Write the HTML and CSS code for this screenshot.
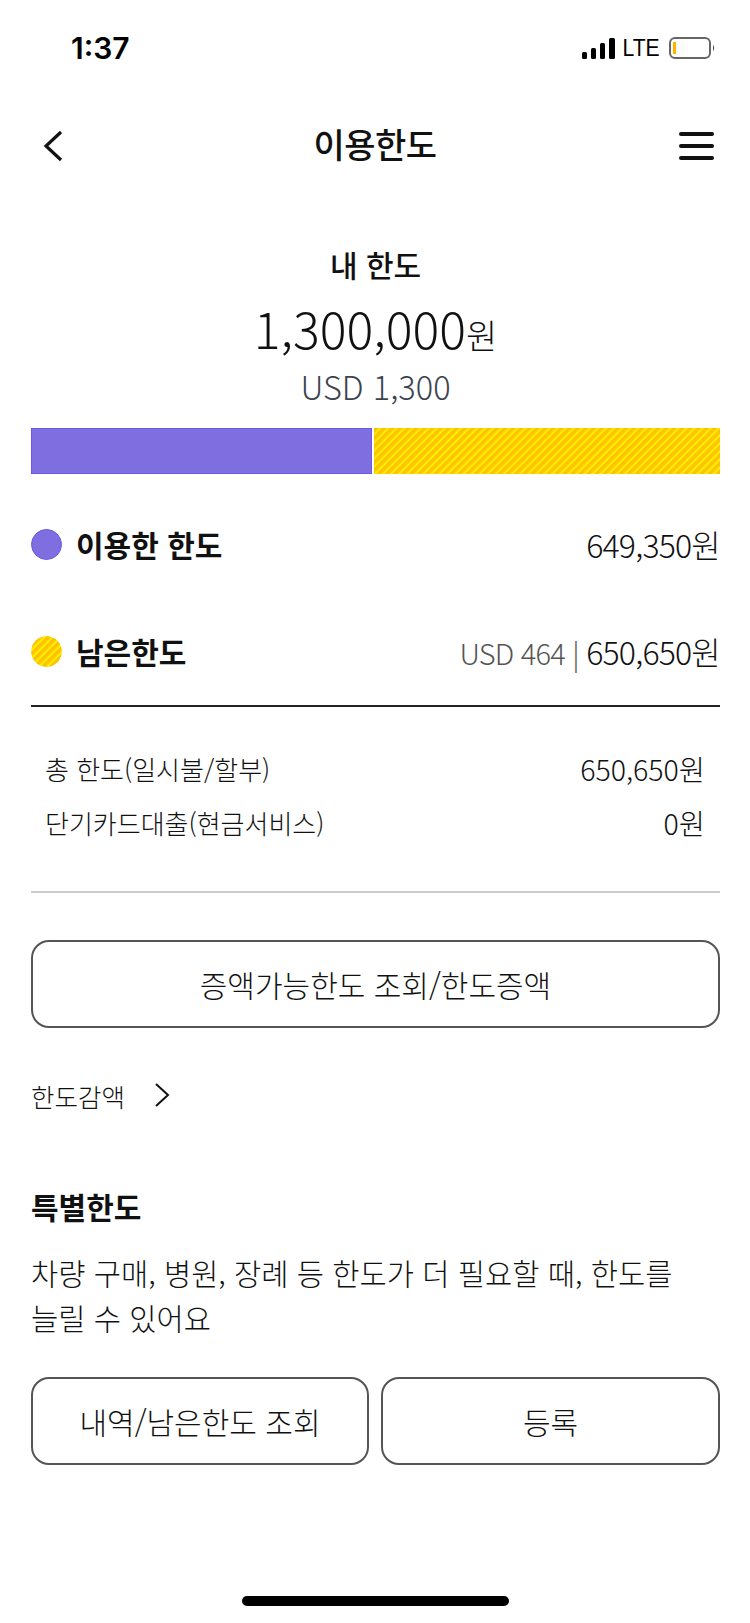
FILE: index.html
```html
<!DOCTYPE html>
<html lang="ko">
<head>
    <meta charset="UTF-8">
    <title>이용한도</title>
    <link rel="stylesheet" href="styles.css">
</head>
<body>
    <svg class="defs" width="0" height="0">
        <defs>
            <pattern id="hatch" width="5.700" height="8" patternUnits="userSpaceOnUse" patternTransform="rotate(45)">
                <rect width="5.700" height="8" fill="#ffc200"></rect>
                <rect x="3.500" width="2.200" height="8" fill="#ffee00"></rect>
            </pattern>
        </defs>
    </svg>

    <div class="status-bar">
        <span class="time">1:37</span>
        <div class="status-icons">
            <svg width="33" height="21" viewBox="0 0 33 21">
                <rect x="0" y="14" width="5" height="7" rx="1.5" fill="#000"></rect>
                <rect x="9" y="10" width="5" height="11" rx="1.5" fill="#000"></rect>
                <rect x="18" y="5" width="5" height="16" rx="1.5" fill="#000"></rect>
                <rect x="27" y="0" width="6" height="21" rx="1.5" fill="#000"></rect>
            </svg>
            <span class="lte">LTE</span>
            <svg width="46" height="22" viewBox="0 0 46 22">
                <rect x="1" y="1" width="40" height="20" rx="5" fill="none" stroke="#666" stroke-width="2"></rect>
                <rect x="4" y="5" width="3" height="12" fill="#ffb400"></rect>
                <path d="M44 8 C45.500 9 45.500 13 44 14 Z" fill="#555"></path>
            </svg>
        </div>
    </div>

    <header class="nav">
        <svg class="nav-back" width="20" height="32" viewBox="0 0 20 32">
            <path d="M18 2 L3 16 L18 30" fill="none" stroke="#111" stroke-width="3.200"></path>
        </svg>
        <h1>이용한도</h1>
        <div class="nav-menu"><span></span><span></span><span></span></div>
    </header>

    <section class="summary">
        <h2>내 한도</h2>
        <p class="total">1,300,000<small>원</small></p>
        <p class="total-usd">USD 1,300</p>
    </section>

    <div class="bar">
        <div class="bar-used"></div>
        <svg class="bar-left" width="346" height="46"><rect width="346" height="46" fill="url(#hatch)"></rect></svg>
    </div>

    <div class="legend-row first">
        <span class="dot dot-used"></span>
        <strong>이용한 한도</strong>
        <span class="amount">649,350원</span>
    </div>
    <div class="legend-row">
        <svg class="dot" width="31" height="31"><circle cx="15.500" cy="15.500" r="15.500" fill="url(#hatch)"></circle></svg>
        <strong>남은한도</strong>
        <span class="amount"><em>USD 464 | </em>650,650원</span>
    </div>

    <div class="detail">
        <div class="detail-row"><span>총 한도(일시불/할부)</span><span class="detail-value">650,650원</span></div>
        <div class="detail-row"><span>단기카드대출(현금서비스)</span><span class="detail-value">0원</span></div>
    </div>

    <button class="btn btn-wide">증액가능한도 조회/한도증액</button>

    <div class="link-row">
        <span>한도감액</span>
        <svg width="16" height="24" viewBox="0 0 16 24">
            <path d="M2 1 L14 12 L2 23" fill="none" stroke="#111" stroke-width="2"></path>
        </svg>
    </div>

    <section class="special">
        <h3>특별한도</h3>
        <p>차량 구매, 병원, 장례 등 한도가 더 필요할 때, 한도를<br>늘릴 수 있어요</p>
        <div class="btn-group">
            <button class="btn">내역/남은한도 조회</button>
            <button class="btn">등록</button>
        </div>
    </section>

    <div class="home-bar"></div>
</body>
</html>
```
FILE: styles.css
```css
/* General styles */
* {
    box-sizing: border-box;
}

body {
    width: 750px;
    height: 1623px;
    margin: 0;
    padding: 0 30px 0 31px;
    overflow: hidden;
    background-color: #fff;
    color: #111;
    font-family: "Noto Sans CJK KR", "Noto Sans", sans-serif;
    position: relative;
}

.defs {
    position: absolute;
}

/* Status bar */
.status-bar {
    display: flex;
    justify-content: space-between;
    align-items: center;
    height: 22px;
    margin-top: 37px;
    padding-left: 40px;
}

.time {
    font-family: Inter, sans-serif;
    font-size: 30px;
    font-weight: 600;
    line-height: 22px;
    color: #000;
}

.status-icons {
    display: flex;
    align-items: center;
    margin-right: 5px;
}

.lte {
    font-family: "Liberation Sans", sans-serif;
    font-size: 24px;
    line-height: 22px;
    margin: 0 7px 0 5px;
    transform: scaleX(0.88);
    color: #000;
}

/* Nav */
.nav {
    display: flex;
    justify-content: space-between;
    align-items: center;
    height: 40px;
    margin-top: 67px;
}

.nav h1 {
    margin: 0 0 6px 8px;
    font-size: 34px;
    font-weight: 500;
    letter-spacing: -0.5px;
}

.nav-back {
    margin-left: 12px;
}

.nav-menu {
    display: flex;
    flex-direction: column;
    gap: 8px;
    width: 35px;
    margin-right: 6px;
}

.nav-menu span {
    height: 4px;
    background-color: #111;
    border-radius: 2px;
}

/* Summary */
.summary {
    margin-top: 78px;
    text-align: center;
}

.summary h2 {
    margin: 0;
    font-size: 30px;
    font-weight: 500;
    line-height: 40px;
}

.total {
    margin: 14px 0 0;
    font-size: 50px;
    font-weight: 300;
    line-height: 58px;
}

.total small {
    font-size: 34px;
}

.total-usd {
    margin: 0;
    font-size: 32.5px;
    font-weight: 300;
    line-height: 44px;
    color: #3c4350;
}

/* Usage bar */
.bar {
    display: flex;
    gap: 2px;
    height: 46px;
    margin-top: 20px;
}

.bar-used {
    width: 341px;
    background-color: #7f6ee0;
    border: 1px solid #6a58e8;
}

.bar-left {
    display: block;
}

/* Legend */
.legend-row {
    display: flex;
    align-items: center;
    height: 40px;
    margin-top: 67px;
}

.legend-row.first {
    margin-top: 50px;
}

.legend-row strong {
    margin-left: 14px;
    font-size: 30px;
    font-weight: 700;
}

.dot {
    display: block;
    width: 31px;
    height: 31px;
    border-radius: 50%;
}

.dot-used {
    background-color: #7f6ee0;
    border: 1px solid #6a58e8;
}

.amount {
    margin-left: auto;
    font-size: 32px;
    font-weight: 300;
    letter-spacing: -0.8px;
}

.amount em {
    font-style: normal;
    font-size: 29px;
    color: #555;
}

/* Details */
.detail {
    margin-top: 34px;
    padding: 34px 15px 42px 14px;
    border-top: 2px solid #222;
    border-bottom: 2px solid #ccc;
}

.detail-row {
    display: flex;
    justify-content: space-between;
    align-items: center;
    height: 54px;
    font-size: 26px;
    font-weight: 300;
}

.detail-value {
    font-size: 28.5px;
}

/* Buttons */
.btn {
    display: block;
    height: 88px;
    padding: 0;
    background-color: #fff;
    border: 2px solid #555;
    border-radius: 18px;
    color: #111;
    font-family: inherit;
    font-size: 30px;
    font-weight: 300;
}

.btn-wide {
    width: 100%;
    margin-top: 47px;
}

.link-row {
    display: flex;
    align-items: center;
    gap: 29px;
    height: 40px;
    margin-top: 47px;
    font-size: 25.5px;
    font-weight: 300;
}

.special {
    margin-top: 71px;
}

.special h3 {
    margin: 0;
    font-size: 30px;
    font-weight: 700;
    line-height: 40px;
}

.special p {
    margin: 24px 0 0;
    font-size: 29.6px;
    font-weight: 300;
    line-height: 45px;
}

.btn-group {
    display: grid;
    grid-template-columns: 338px 1fr;
    gap: 12px;
    margin-top: 37px;
}

.home-bar {
    position: absolute;
    left: 242px;
    top: 1596px;
    width: 267px;
    height: 10px;
    background-color: #000;
    border-radius: 5px;
}
```
